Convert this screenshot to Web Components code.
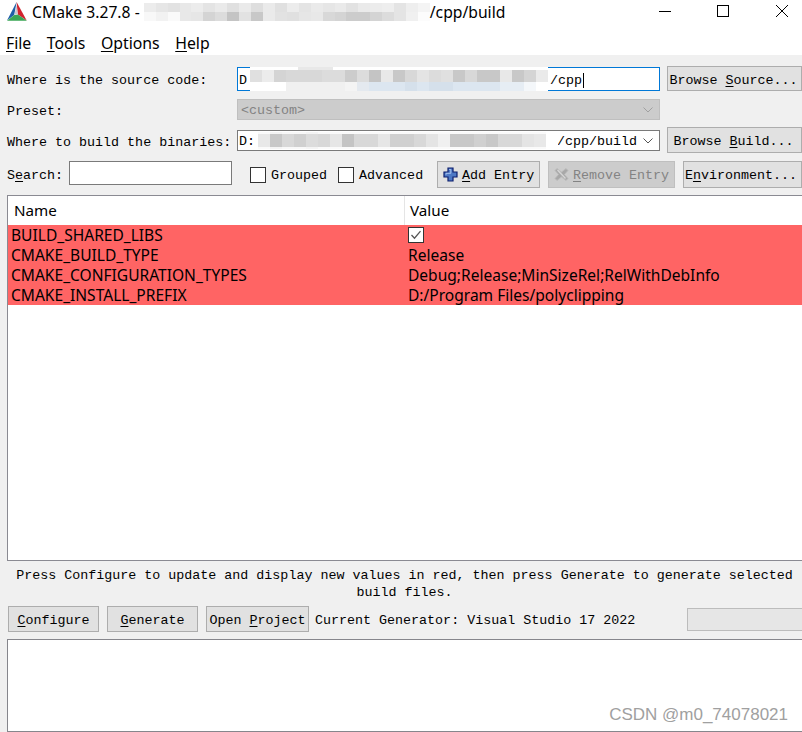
<!DOCTYPE html>
<html><head><meta charset="utf-8">
<style>
html,body{margin:0;padding:0;background:#f0f0f0;overflow:hidden;width:802px;height:732px}
u{text-decoration:underline;text-underline-offset:2px}
</style></head>
<body>
<cm-window>
  <cm-titlebar slot="top">
    <span>CMake 3.27.8 - </span>
    <cm-mosaic w="286" style="margin-left:0" rows="9:ec,e6,e2,e8,ec,e4,ea,e0,ea,de,ea,e0,ec,e4,ea,e6,ea,e2,ea,ec,ee,e4,ee,f4;9:f8,f2,fa,e8,e6,d4,dc,c4,e2,c8,ea,e2,e0,e6,e8,d8,d4,cc,cc,d4,dc,e4,f0,fc"></cm-mosaic>
    <span>/cpp/build</span>
  </cm-titlebar>
  <cm-menubar slot="top">
    <cm-menu><u>F</u>ile</cm-menu><cm-menu><u>T</u>ools</cm-menu><cm-menu><u>O</u>ptions</cm-menu><cm-menu><u>H</u>elp</cm-menu>
  </cm-menubar>

  <cm-form>
    <cm-label>Where is the source code:</cm-label>
    <cm-field kind="focus" style="height:24px;margin-top:1px">
      <span>D</span>
      <cm-mosaic class="over" w="298" style="left:12px;top:-1px" rows="3:ff,ff,ff,ff,e8,e8,e8,ff,ff,ff,ff,ff,ff,ff,ff,ff,ff,ff,ff,ff,ff,ff,ff,ff,ff;12:e0,ec,d4,d8,d8,d8,dc,dc,cc,dc,c4,e8,c8,d8,e4,dc,e0,c8,d8,c8,c8,e8,c8,d4,ea;9:ff,ff,ff,f0,f0,f0,f0,f0,f4,e4e9ef,dce6f0,dce6f0,dce6f0,d5e0eb,dce6f0,d5e0eb,d5e0eb,dce6f0,dce6f0,dce6f0,dce6f0,e6edf4,e6edf4,f4f7fa,ff"></cm-mosaic>
      <span style="margin-left:303px">/cpp</span><i class="caret"></i>
    </cm-field>
    <cm-button wide style="padding-right:2px">Browse <u>S</u>ource...</cm-button>

    <cm-label>Preset:</cm-label>
    <cm-field kind="disabled" style="height:21px"><span>&lt;custom&gt;</span><cm-chevron color="#a0a0a0"></cm-chevron></cm-field>
    <span></span>

    <cm-label>Where to build the binaries:</cm-label>
    <cm-field style="height:21px;margin-top:2px">
      <span>D:</span>
      <cm-mosaic class="over" w="300" style="left:20px;top:1px" rows="2:fa,f4,f8,f8,f4,fa,fa,fa,fa,fa,fa,fa,fa,fa,fa,fa,fa,fa,fa,fa,fa,fa,fa,fa,ff;13:e8,c8,d8,d0,dc,d8,e6,c4,d8,d8,e6,d0,d0,d8,e4,f0,c8,c8,d0,c8,d8,d8,e4,e8,ff;2:fa,f4,f8,f8,f4,fa,fa,fa,fa,fa,fa,fa,fa,fa,fa,fa,fa,fa,fa,fa,fa,fa,fa,fa,ff"></cm-mosaic>
      <span style="margin-left:302px">/cpp/build</span><cm-chevron color="#555"></cm-chevron>
    </cm-field>
    <cm-button wide style="margin-top:-1px;height:26px;padding-right:2px">Browse <u>B</u>uild...</cm-button>
  </cm-form>

  <cm-searchrow>
    <cm-label style="--s:2px">S<u>e</u>arch:</cm-label>
    <cm-field style="width:163px;height:24px;margin-left:6px"></cm-field>
    <cm-check style="margin-left:18px">Grouped</cm-check>
    <cm-check style="margin-left:11px">Advanced</cm-check>
    <cm-button style="width:103px;margin-left:14px;--s:2px"><svg width="15" height="15" viewBox="0 0 15 15" style="margin-right:4px;flex:none"><path d="M5 1h5v4h4v5h-4v4H5v-4H1V5h4z" fill="#4d78c4" stroke="#0c1f6e" stroke-width="1.2"/><path d="M6.2 2.5h1.6v3.8H3v1.4" fill="none" stroke="#a8c4f0" stroke-width="1"/></svg><span><u>A</u>dd Entry</span></cm-button>
    <cm-button disabled style="width:127px;margin-left:8px;--s:2px"><svg width="15" height="15" viewBox="0 0 15 15" style="margin-right:4px;flex:none"><path d="M3 1.5l4.5 3.5 4.5-3.5 2 2-3.5 4 3.5 4-2 2-4.5-3.5-4.5 3.5-2-2 3.5-4-3.5-4z" fill="#a8a8a8" stroke="#bdbdbd" stroke-width="1"/><path d="M3.5 3l8 8.5" stroke="#d6d6d6" stroke-width="1.4"/></svg><span><u>R</u>emove Entry</span></cm-button>
    <cm-button style="width:119px;margin-left:8px;--s:2px;padding-right:3px"><span>E<u>n</u>vironment...</span></cm-button>
  </cm-searchrow>

  <cm-table>
    <cm-row head><span>Name</span><span>Value</span></cm-row>
    <cm-row><span>BUILD_SHARED_LIBS</span><cm-tick></cm-tick></cm-row>
    <cm-row><span>CMAKE_BUILD_TYPE</span><span>Release</span></cm-row>
    <cm-row><span>CMAKE_CONFIGURATION_TYPES</span><span>Debug;Release;MinSizeRel;RelWithDebInfo</span></cm-row>
    <cm-row><span>CMAKE_INSTALL_PREFIX</span><span>D:/Program Files/polyclipping</span></cm-row>
  </cm-table>

  <cm-message>Press Configure to update and display new values in red, then press Generate to generate selected<br>build files.</cm-message>

  <cm-actions>
    <cm-button style="width:91px"><span><u>C</u>onfigure</span></cm-button>
    <cm-button style="width:91px;margin-left:8px"><span><u>G</u>enerate</span></cm-button>
    <cm-button style="width:103px;margin-left:8px"><span>Open <u>P</u>roject</span></cm-button>
    <cm-label style="margin-left:6px;height:26px;box-sizing:border-box">Current Generator: Visual Studio 17 2022</cm-label>
    <cm-progress></cm-progress>
  </cm-actions>

  <cm-console><span>CSDN @m0_74078021</span></cm-console>
</cm-window>

<script>
const MONO='"Liberation Mono","DejaVu Sans Mono",monospace';
const UI='"Noto Sans","Open Sans",sans-serif';
function def(name,css,html,extra){
  customElements.define(name,class extends HTMLElement{
    constructor(){super();const r=this.attachShadow({mode:'open'});r.innerHTML='<style>'+css+'</style>'+(html||'<slot></slot>');}
    connectedCallback(){extra&&extra(this)}
  });
}
const U='::slotted(u){text-decoration:underline;text-underline-offset:2px}';
def('cm-window',`:host{display:block;width:802px;height:732px;overflow:hidden;background:#f0f0f0;font:13.35px/16px ${MONO};color:#000}
  .top{background:#fff;height:55px;display:flex;flex-direction:column}
  .main{display:flex;flex-direction:column;padding-top:11px}`,
  `<div class="top"><slot name="top"></slot></div><div class="main"><slot></slot></div>`);
def('cm-titlebar',`:host{display:flex;align-items:center;height:24px;padding-left:7px;font:15.7px/24px ${UI};color:#000;position:relative;white-space:pre}
  svg.logo{flex:none;margin-right:5px;margin-top:-2px}
  .ctl{position:absolute;top:0;left:0}`,
  `<svg class="logo" width="20" height="20" viewBox="0 0 20 20"><path d="M9.6 1L0 19.5l7.2-5.6z" fill="#1f5fa8"/><path d="M9.6 1l1.2 12.4 8.9 6z" fill="#d2232e"/><path d="M0 19.8h19.9l-9-6.2-3.6.4z" fill="#3aa655"/><path d="M9.6 3L7.6 13.5l3-.3z" fill="#c8c8d0"/></svg>
   <slot></slot>
   <svg class="ctl" width="802" height="24" fill="none" stroke="#000" stroke-width="1" shape-rendering="crispEdges"><path d="M659 11.5h12"/><rect x="717.5" y="5.5" width="11" height="11"/><path d="M776 5l12 12M788 5l-12 12" shape-rendering="auto"/></svg>`);
def('cm-mosaic',`:host{display:inline-block;flex:none;vertical-align:middle}
  :host(.over){position:absolute}
  .r{display:flex}.r i{flex:1 1 0;display:block}`,`<div id="m"></div>`,el=>{
    const m=el.shadowRoot.getElementById('m');m.style.width=el.getAttribute('w')+'px';
    m.innerHTML=el.getAttribute('rows').split(';').map(row=>{const [h,c]=row.split(':');
      return `<div class="r" style="height:${h}px">`+c.split(',').map(x=>`<i style="background:#${x.length==2?x+x+x:x}"></i>`).join('')+'</div>'}).join('');
  });
def('cm-menubar',`:host{display:flex;gap:15.6px;height:31px;box-sizing:border-box;align-items:center;padding:8px 0 0 6px;font:15.8px/23px ${UI}}`);
def('cm-menu',`:host{display:block}`+U);
def('cm-form',`:host{display:grid;grid-template-columns:230px 423px 142px;grid-template-rows:25px 21px 25px;padding-left:7px;row-gap:8px;width:795px}
  ::slotted(cm-button){margin-left:7px}`,`<slot></slot>`);
def('cm-label',`:host{display:flex;align-items:center;white-space:pre;box-sizing:border-box;padding-top:var(--s,4px)}`+U);
def('cm-field',`:host{display:flex;align-items:center;box-sizing:border-box;background:#fff;border:1px solid #7a7a7a;padding:var(--s,3px) 4px 0 1px;position:relative;white-space:pre;align-self:start}
  :host([kind=focus]){border-color:#0078d7}
  :host([kind=disabled]){background:#ccc;border-color:#bfbfbf;color:#838383;padding-left:3px}
  ::slotted(.caret){display:block;width:1px;height:15px;background:#000;margin-left:1px}`);
def('cm-chevron',`:host{position:absolute;right:6px;top:50%;margin-top:-3px;display:block;height:6px}svg{display:block}`,
  `<svg width="10" height="6" viewBox="0 0 10 6" fill="none"><path id="p" d="M.5 .5l4.5 4.5 4.5-4.5" stroke="#555"/></svg>`,
  el=>el.shadowRoot.getElementById('p').setAttribute('stroke',el.getAttribute('color')));
def('cm-button',`:host{display:flex;align-items:center;justify-content:center;box-sizing:border-box;background:#e1e1e1;border:1px solid #adadad;white-space:pre;height:27px;padding-top:var(--s,4px)}
  :host([wide]){height:25px}
  :host([disabled]){background:#ccc;border-color:#bfbfbf;color:#838383}
  ::slotted(svg){margin-top:calc(0px - var(--s,4px))}`+U);
def('cm-searchrow',`:host{display:flex;align-items:center;height:27px;margin-top:8px;padding-left:7px;width:795px}`);
def('cm-check',`:host{display:flex;align-items:center;gap:5px;white-space:pre}
  .t{padding-top:2px}
  .b{width:14px;height:14px;border:1px solid #333;background:#fff;display:block;flex:none}`,`<i class="b"></i><span class="t"><slot></slot></span>`);
def('cm-table',`:host{display:block;box-sizing:border-box;margin:7px 0 0 7px;width:795px;height:366px;background:#fff;border:1px solid #8a8a92;border-right:0;font:15.55px/20px ${UI}}`);
def('cm-row',`:host{display:grid;grid-template-columns:396px 1fr;height:20px;background:#ff6464;white-space:pre;align-items:center;overflow:hidden}
  :host([head]){height:29px;background:#fff;font-size:15.2px}
  ::slotted(*){padding-left:3px}
  ::slotted(:last-child){padding-left:4px}
  :host([head]) ::slotted(*){padding-left:6px;line-height:29px}
  :host([head]) ::slotted(:first-child){border-right:1px solid #e5e5e5;margin-right:-1px;box-sizing:border-box}`);
def('cm-tick',`:host{display:block}.b{display:block;width:14px;height:14px;border:1px solid #333;background:#fff}svg{display:block}`,
  `<span class="b"><svg width="14" height="14" viewBox="0 0 14 14" fill="none"><path d="M2.5 7l3 3.2 6-7" stroke="#555" stroke-width="1.3"/></svg></span>`);
def('cm-message',`:host{display:block;text-align:center;height:45px;width:795px;margin-left:7px;box-sizing:border-box;padding-top:6px;line-height:17px;white-space:pre}`);
def('cm-actions',`:host{display:flex;align-items:center;height:26px;padding-left:8px;width:794px;position:relative}
  ::slotted(cm-button){height:26px}`);
def('cm-progress',`:host{display:block;box-sizing:border-box;width:115px;height:23px;margin-left:auto;background:#e6e6e6;border:1px solid #bcbcbc;border-right:0}`,`<span></span>`);
def('cm-console',`:host{display:flex;box-sizing:border-box;margin:7px 0 0 7px;width:795px;height:93px;background:#fff;border:1px solid #86868c;border-right:0;justify-content:flex-end;align-items:flex-end}
  ::slotted(span){font:17px/20px "Liberation Sans",sans-serif;color:#a0a0a0;margin:0 14px 6px 0}`);
</script>
</body></html>
